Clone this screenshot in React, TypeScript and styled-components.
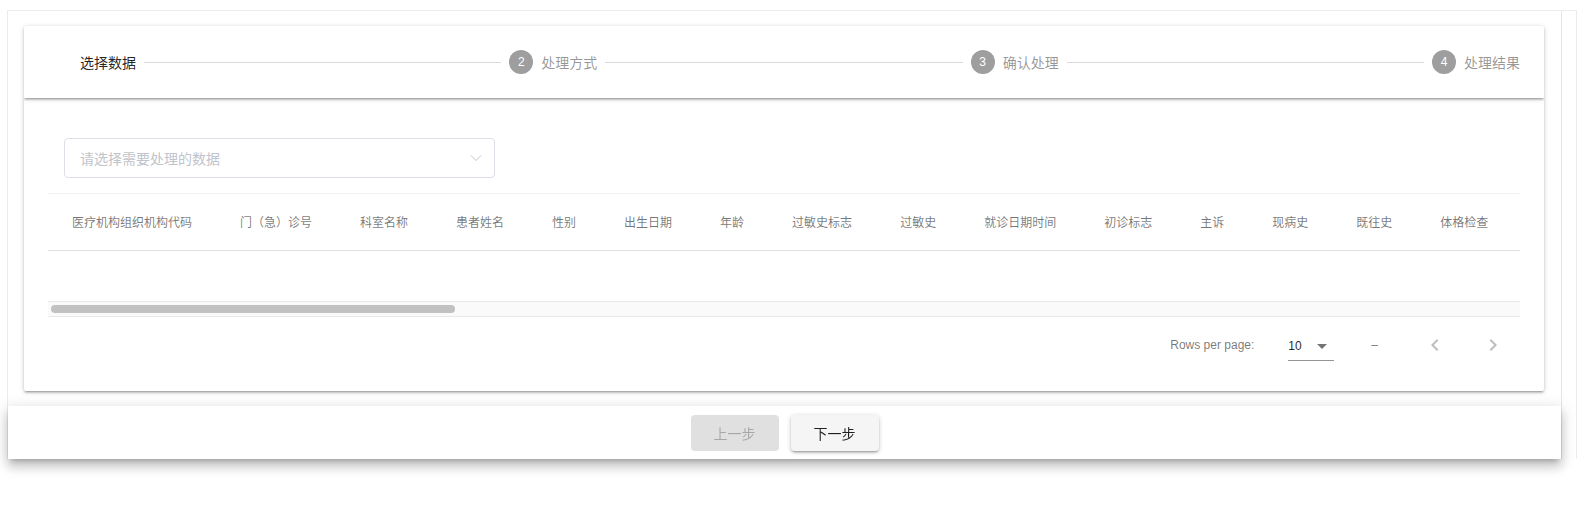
import React from "react";
import styled, { createGlobalStyle } from "styled-components";

const GlobalStyle = createGlobalStyle`
  html, body {
    margin: 0;
    padding: 0;
    background: #ffffff;
  }
  body {
    font-family: "Liberation Sans", "Noto Sans CJK SC", Arial, sans-serif;
    color: rgba(0, 0, 0, 0.87);
  }
  * { box-sizing: border-box; }
`;

const shadow2 =
  "0px 1px 5px 0px rgba(0,0,0,0.2), 0px 2px 2px 0px rgba(0,0,0,0.14), 0px 3px 1px -2px rgba(0,0,0,0.12)";
const shadow8 =
  "0px 5px 5px -3px rgba(0,0,0,0.2), 0px 8px 10px 1px rgba(0,0,0,0.14), 0px 3px 14px 2px rgba(0,0,0,0.12)";

const Frame = styled.div`
  margin: 10px 0 0 7px;
  width: 1570px;
  height: 449px;
  border: 1px solid #ececec;
  border-bottom: none;
  display: flex;
  overflow: hidden;
`;

const Content = styled.div`
  flex: 1 1 auto;
  min-width: 0;
  padding: 15px 17px 60px 16px;
`;

const VerticalTrack = styled.div`
  flex: none;
  width: 15px;
  background: #ffffff;
  border-left: 1px solid #e6e6e6;
`;

const StepperPaper = styled.div`
  position: relative;
  z-index: 1;
  background: #fff;
  border-radius: 2px 2px 0 0;
  box-shadow: ${shadow2};
  padding: 24px;
  display: flex;
  align-items: center;
`;

const Step = styled.div`
  display: flex;
  align-items: center;
  padding: 0 8px;
  flex: none;
  &:first-child { padding-left: 0; }
  &:last-child { padding-right: 0; }
`;

const StepIcon = styled.span<{ $hidden?: boolean }>`
  width: 24px;
  height: 24px;
  border-radius: 50%;
  background: ${(p) => (p.$hidden ? "transparent" : "#9e9e9e")};
  color: #fff;
  font-size: 12px;
  display: grid;
  place-items: center;
  flex: none;
`;

const StepLabel = styled.span<{ $active?: boolean }>`
  margin-left: 8px;
  font-family: "Noto Sans CJK SC", sans-serif;
  font-size: 14px;
  line-height: 20px;
  color: ${(p) => (p.$active ? "rgba(0,0,0,0.87)" : "rgba(0,0,0,0.42)")};
  white-space: nowrap;
`;

const Connector = styled.span`
  flex: 1 1 auto;
  border-top: 1px solid #dadada;
`;

const ContentPaper = styled.div`
  background: #fff;
  border-radius: 0 0 2px 2px;
  box-shadow: ${shadow2};
  padding: 40px 24px 18px;
`;

const SelectBox = styled.div`
  margin-left: 16px;
  width: 431px;
  height: 40px;
  border: 1px solid #dcdfe6;
  border-radius: 4px;
  padding: 0 11px 0 15px;
  display: flex;
  align-items: center;
  justify-content: space-between;
  font-family: "Noto Sans CJK SC", sans-serif;
  font-size: 14px;
  color: #c0c4cc;
`;

const TableScroller = styled.div`
  margin-top: 15px;
  border-top: 1px solid #f3f3f3;
  border-bottom: 1px solid #e8e8e8;
  overflow: hidden;
`;

const HeadRow = styled.div`
  display: flex;
  align-items: center;
  height: 57px;
  border-bottom: 1px solid #e0e0e0;
`;

const HeadCell = styled.div`
  flex: none;
  padding: 0 24px;
  font-family: "Noto Sans CJK SC", sans-serif;
  font-size: 12px;
  line-height: 16px;
  color: rgba(0, 0, 0, 0.54);
  white-space: nowrap;
`;

const EmptyBody = styled.div`
  height: 50px;
`;

const HorizontalTrack = styled.div`
  height: 15px;
  background: #fafafa;
  border-top: 1px solid #e8e8e8;
  padding: 3px 0 3px 3px;
`;

const HorizontalThumb = styled.div`
  width: 404px;
  height: 8px;
  border-radius: 4px;
  background: #c1c1c1;
`;

const Pagination = styled.div`
  height: 56px;
  display: flex;
  align-items: center;
  justify-content: flex-end;
  padding-right: 3px;
  font-size: 12px;
  color: rgba(0, 0, 0, 0.54);
`;

const Caption = styled.span<{ $gap?: number }>`
  margin-left: ${(p) => p.$gap ?? 0}px;
  white-space: nowrap;
`;

const RowsSelect = styled.div`
  margin-left: 34px;
  width: 46px;
  height: 32px;
  padding-top: 3px;
  display: flex;
  align-items: center;
  justify-content: space-between;
  border-bottom: 1px solid rgba(0, 0, 0, 0.42);
  color: rgba(0, 0, 0, 0.87);
`;

const Actions = styled.div`
  margin-left: 33px;
  display: flex;
  gap: 10px;
`;

const IconButton = styled.button`
  width: 48px;
  height: 48px;
  padding: 12px;
  border: none;
  background: transparent;
  border-radius: 50%;
  display: grid;
  place-items: center;
  color: rgba(0, 0, 0, 0.26);
`;

const Footer = styled.div`
  position: fixed;
  left: 8px;
  top: 406px;
  width: 1553px;
  height: 53px;
  background: #fff;
  box-shadow: ${shadow8};
  display: flex;
  align-items: center;
  justify-content: center;
  gap: 12px;
  padding-top: 1px;
  z-index: 2;
`;

const Button = styled.button<{ $disabled?: boolean }>`
  min-width: 88px;
  height: 36px;
  padding: 8px 16px;
  border: none;
  border-radius: 4px;
  font-family: "Noto Sans CJK SC", sans-serif;
  font-size: 14px;
  background: ${(p) => (p.$disabled ? "rgba(0,0,0,0.12)" : "#f5f5f5")};
  color: ${(p) => (p.$disabled ? "rgba(0,0,0,0.26)" : "rgba(0,0,0,0.87)")};
  box-shadow: ${(p) => (p.$disabled ? "none" : shadow2)};
`;

const steps = ["选择数据", "处理方式", "确认处理", "处理结果"];

const columns = [
  "医疗机构组织机构代码",
  "门（急）诊号",
  "科室名称",
  "患者姓名",
  "性别",
  "出生日期",
  "年龄",
  "过敏史标志",
  "过敏史",
  "就诊日期时间",
  "初诊标志",
  "主诉",
  "现病史",
  "既往史",
  "体格检查",
];

const Chevron = ({ dir }: { dir: "left" | "right" }) => (
  <svg width="24" height="24" viewBox="0 0 24 24" fill="currentColor">
    {dir === "left" ? (
      <path d="M15.41 16.59L10.83 12l4.58-4.59L14 6l-6 6 6 6 1.41-1.41z" />
    ) : (
      <path d="M8.59 16.59L13.17 12 8.59 7.41 10 6l6 6-6 6-1.41-1.41z" />
    )}
  </svg>
);

export default function App() {
  return (
    <>
      <GlobalStyle />
      <Frame>
        <Content>
          <StepperPaper>
            {steps.map((s, i) => (
              <React.Fragment key={s}>
                {i > 0 && <Connector />}
                <Step>
                  <StepIcon $hidden={i === 0}>{i === 0 ? "" : i + 1}</StepIcon>
                  <StepLabel $active={i === 0}>{s}</StepLabel>
                </Step>
              </React.Fragment>
            ))}
          </StepperPaper>
          <ContentPaper>
            <SelectBox>
              <span>请选择需要处理的数据</span>
              <svg width="14" height="14" viewBox="0 0 14 14" fill="none">
                <path d="M2 4.5l5 5 5-5" stroke="#c0c4cc" strokeWidth="1" />
              </svg>
            </SelectBox>
            <TableScroller>
              <HeadRow>
                {columns.map((c) => (
                  <HeadCell key={c}>{c}</HeadCell>
                ))}
              </HeadRow>
              <EmptyBody />
              <HorizontalTrack>
                <HorizontalThumb />
              </HorizontalTrack>
            </TableScroller>
            <Pagination>
              <Caption>Rows per page:</Caption>
              <RowsSelect>
                <span>10</span>
                <svg width="24" height="24" viewBox="0 0 24 24" fill="rgba(0,0,0,0.54)">
                  <path d="M7 10l5 5 5-5z" />
                </svg>
              </RowsSelect>
              <Caption $gap={37}>–</Caption>
              <Actions>
                <IconButton aria-label="previous page">
                  <Chevron dir="left" />
                </IconButton>
                <IconButton aria-label="next page">
                  <Chevron dir="right" />
                </IconButton>
              </Actions>
            </Pagination>
          </ContentPaper>
        </Content>
        <VerticalTrack />
      </Frame>
      <Footer>
        <Button $disabled>上一步</Button>
        <Button>下一步</Button>
      </Footer>
    </>
  );
}
